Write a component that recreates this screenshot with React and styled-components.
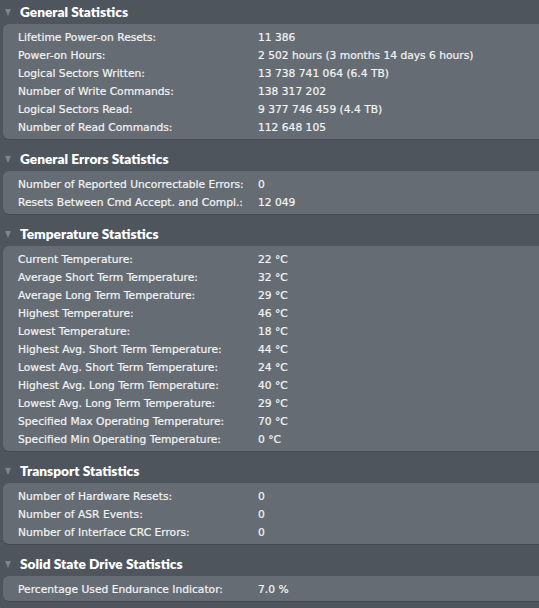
import React from "react";
import styled, { createGlobalStyle } from "styled-components";

const GlobalStyle = createGlobalStyle`
  html, body {
    margin: 0;
    padding: 0;
    background: #4e555c;
    overflow: hidden;
  }
`;

const Page = styled.div`
  width: 539px;
  height: 608px;
  background: #4e555c;
  font-family: "DejaVu Sans", "Liberation Sans", sans-serif;
  color: #f3f4f5;
  overflow: hidden;
`;

const Section = styled.section`
  & + & {
    margin-top: 8px;
  }
`;

const Header = styled.div`
  height: 24px;
  box-sizing: border-box;
  padding: 0 0 2px 5px;
  display: flex;
  align-items: center;
  gap: 9px;
  font-family: Lato, "DejaVu Sans", sans-serif;
  font-size: 13.7px;
  font-weight: 800;
  color: #ffffff;
`;

const Triangle = styled.span`
  width: 0;
  height: 0;
  border-left: 3.5px solid transparent;
  border-right: 3.5px solid transparent;
  border-top: 7px solid #7f858b;
  margin-top: 2px;
`;

const Panel = styled.div`
  margin-left: 3px;
  margin-right: -10px;
  padding: 4px 0 3px 15px;
  background: #666c73;
  border-radius: 6px;
  box-shadow: 0 1px 0 #454b51;
`;

const Row = styled.div`
  display: grid;
  grid-template-columns: 240px 1fr;
  height: 18px;
  align-items: center;
  font-size: 10.7px;
  white-space: nowrap;
  -webkit-text-stroke: 0.2px #f3f4f5;
`;

const Label = styled.span``;
const Value = styled.span``;

const sections = [
  {
    title: "General Statistics",
    rows: [
      ["Lifetime Power-on Resets:", "11 386"],
      ["Power-on Hours:", "2 502 hours (3 months 14 days 6 hours)"],
      ["Logical Sectors Written:", "13 738 741 064 (6.4 TB)"],
      ["Number of Write Commands:", "138 317 202"],
      ["Logical Sectors Read:", "9 377 746 459 (4.4 TB)"],
      ["Number of Read Commands:", "112 648 105"],
    ],
  },
  {
    title: "General Errors Statistics",
    rows: [
      ["Number of Reported Uncorrectable Errors:", "0"],
      ["Resets Between Cmd Accept. and Compl.:", "12 049"],
    ],
  },
  {
    title: "Temperature Statistics",
    rows: [
      ["Current Temperature:", "22 °C"],
      ["Average Short Term Temperature:", "32 °C"],
      ["Average Long Term Temperature:", "29 °C"],
      ["Highest Temperature:", "46 °C"],
      ["Lowest Temperature:", "18 °C"],
      ["Highest Avg. Short Term Temperature:", "44 °C"],
      ["Lowest Avg. Short Term Temperature:", "24 °C"],
      ["Highest Avg. Long Term Temperature:", "40 °C"],
      ["Lowest Avg. Long Term Temperature:", "29 °C"],
      ["Specified Max Operating Temperature:", "70 °C"],
      ["Specified Min Operating Temperature:", "0 °C"],
    ],
  },
  {
    title: "Transport Statistics",
    rows: [
      ["Number of Hardware Resets:", "0"],
      ["Number of ASR Events:", "0"],
      ["Number of Interface CRC Errors:", "0"],
    ],
  },
  {
    title: "Solid State Drive Statistics",
    rows: [["Percentage Used Endurance Indicator:", "7.0 %"]],
  },
];

export default function App() {
  return (
    <Page>
      <GlobalStyle />
      {sections.map((s) => (
        <Section key={s.title}>
          <Header>
            <Triangle />
            {s.title}
          </Header>
          <Panel>
            {s.rows.map(([label, value]) => (
              <Row key={label}>
                <Label>{label}</Label>
                <Value>{value}</Value>
              </Row>
            ))}
          </Panel>
        </Section>
      ))}
    </Page>
  );
}
